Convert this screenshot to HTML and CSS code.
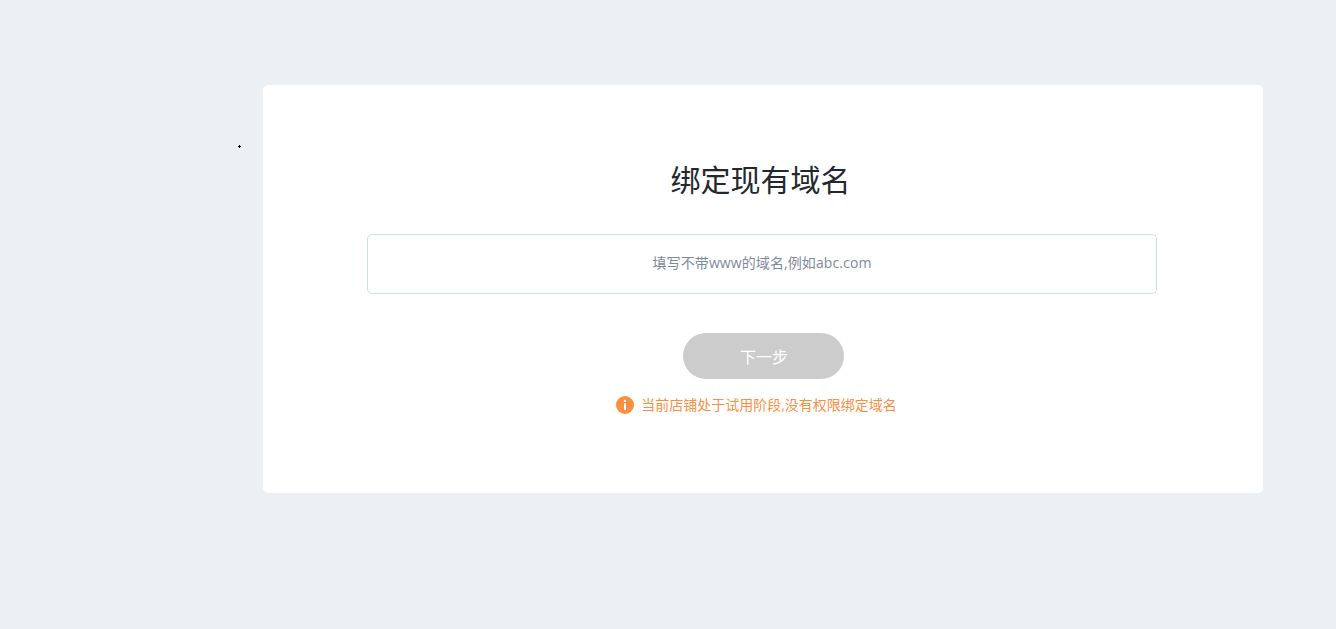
FILE: index.html
```html
<!DOCTYPE html>
<html lang="zh-CN">

<head>
    <meta charset="UTF-8">
    <title>绑定现有域名</title>
    <link rel="stylesheet" href="styles.css">
</head>

<body>
    <div class="cursor-dot"></div>
    <div class="card">
        <h1 class="card-title">绑定现有域名</h1>
        <input class="domain-input" type="text" placeholder="填写不带www的域名,例如abc.com" />
        <button class="next-button" disabled>下一步</button>
        <div class="notice">
            <svg class="notice-icon" viewBox="0 0 18 18" width="18" height="18">
                <circle cx="9" cy="9" r="9" fill="#fb8f3f" />
                <rect x="7.9" y="3.8" width="2.2" height="2.2" rx="1" fill="#fff" />
                <rect x="8" y="7.2" width="2" height="6.8" fill="#fff" />
            </svg>
            <span>当前店铺处于试用阶段,没有权限绑定域名</span>
        </div>
    </div>
</body>

</html>
```

FILE: styles.css
```css
html {
    height: 100%;
}

body {
    margin: 0;
    min-height: 100%;
    box-sizing: border-box;
    padding: 85px 73px 0 263px;
    background-color: #ecf0f3;
    font-family: "Open Sans", "Noto Sans CJK SC", sans-serif;
}

.cursor-dot {
    position: absolute;
    top: 145px;
    left: 238px;
    width: 3px;
    height: 3px;
    background: linear-gradient(#000, #000) center / 1px 3px no-repeat,
        linear-gradient(#000, #000) center / 3px 1px no-repeat;
}

.card {
    width: 1000px;
    height: 408px;
    box-sizing: border-box;
    padding-top: 73px;
    display: flex;
    flex-direction: column;
    align-items: center;
    background-color: #fff;
    border-radius: 5px;
}

.card-title {
    margin: 0 5px 0 0;
    font-size: 30px;
    font-weight: 400;
    line-height: 44px;
    color: #23282d;
}

.domain-input {
    width: 790px;
    height: 60px;
    margin: 32px 2px 0 0;
    padding: 0 10px 3px;
    box-sizing: border-box;
    border: 1px solid #cfdeeb;
    border-radius: 5px;
    font-family: inherit;
    font-size: 14px;
    letter-spacing: 0.1px;
    text-align: center;
    outline: none;
}

.domain-input::placeholder {
    color: #7c8b9c;
    opacity: 1;
}

.next-button {
    width: 161px;
    height: 46px;
    margin-top: 39px;
    padding: 0 0 0 2px;
    border: none;
    border-radius: 23px;
    background-color: #ccc;
    color: #fff;
    font-family: inherit;
    font-size: 16px;
}

.notice {
    display: flex;
    align-items: center;
    gap: 7px;
    margin: 17px 13px 0 0;
    font-size: 14px;
    line-height: 18px;
    color: #fb8f3f;
}

.notice-icon {
    flex: none;
}
```
